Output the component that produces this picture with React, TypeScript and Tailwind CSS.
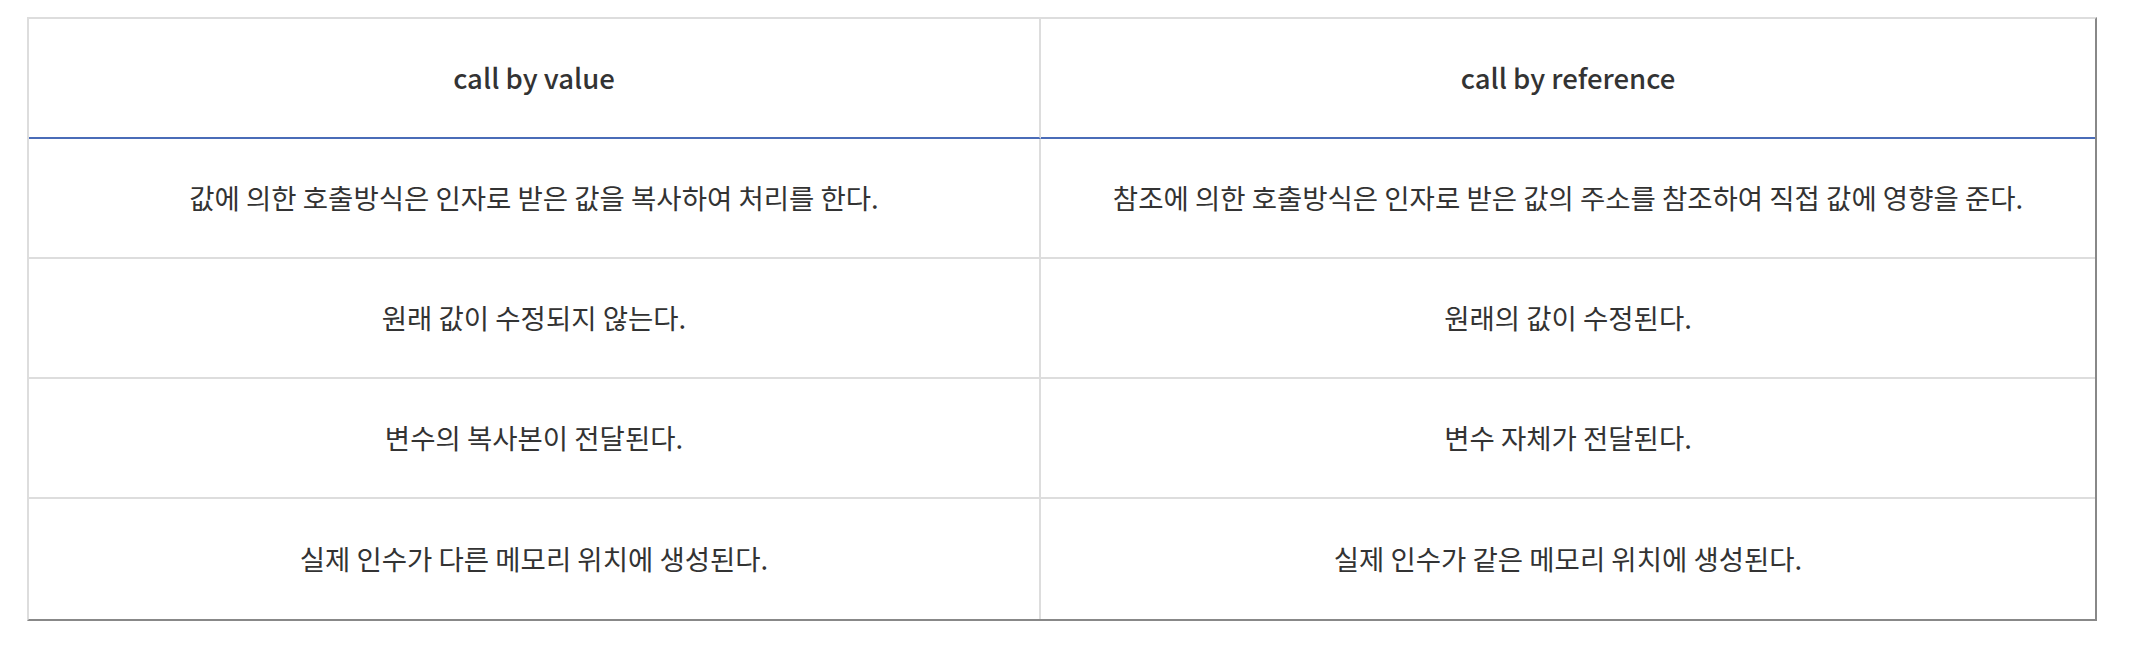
const HEAD = ['call by value', 'call by reference'];

const ROWS: [string, string][] = [
  [
    '값에 의한 호출방식은 인자로 받은 값을 복사하여 처리를 한다.',
    '참조에 의한 호출방식은 인자로 받은 값의 주소를 참조하여 직접 값에 영향을 준다.',
  ],
  ['원래 값이 수정되지 않는다.', '원래의 값이 수정된다.'],
  ['변수의 복사본이 전달된다.', '변수 자체가 전달된다.'],
  ['실제 인수가 다른 메모리 위치에 생성된다.', '실제 인수가 같은 메모리 위치에 생성된다.'],
];

export default function App() {
  return (
    <div
      className="min-h-[647px] bg-white pt-[17px] pl-[27px] text-[#333]"
      style={{ fontFamily: '"Noto Sans CJK KR", "Noto Sans", sans-serif' }}
    >
      <div className="grid w-[2070px] grid-cols-[1012px_1054px] border-t-2 border-l-2 border-r-2 border-b-2 border-t-[#ddd] border-l-[#ddd] border-r-[#888] border-b-[#888]">
        {/* Header */}
        {HEAD.map((h, i) => (
          <div
            key={h}
            className={`flex h-[120px] items-center justify-center border-b-2 border-b-[#4a6cb8] text-[27.5px] font-medium ${
              i === 0 ? 'border-r-2 border-r-[#ddd]' : ''
            }`}
          >
            {h}
          </div>
        ))}

        {/* Body rows */}
        {ROWS.map((row, r) =>
          row.map((cell, i) => (
            <div
              key={`${r}-${i}`}
              className={`flex h-[120px] items-center justify-center text-[27.5px] ${
                i === 0 ? 'border-r-2 border-r-[#ddd]' : ''
              } ${r < ROWS.length - 1 ? 'border-b-2 border-b-[#ddd]' : 'h-[118px]'}`}
            >
              {cell}
            </div>
          ))
        )}
      </div>
    </div>
  );
}
